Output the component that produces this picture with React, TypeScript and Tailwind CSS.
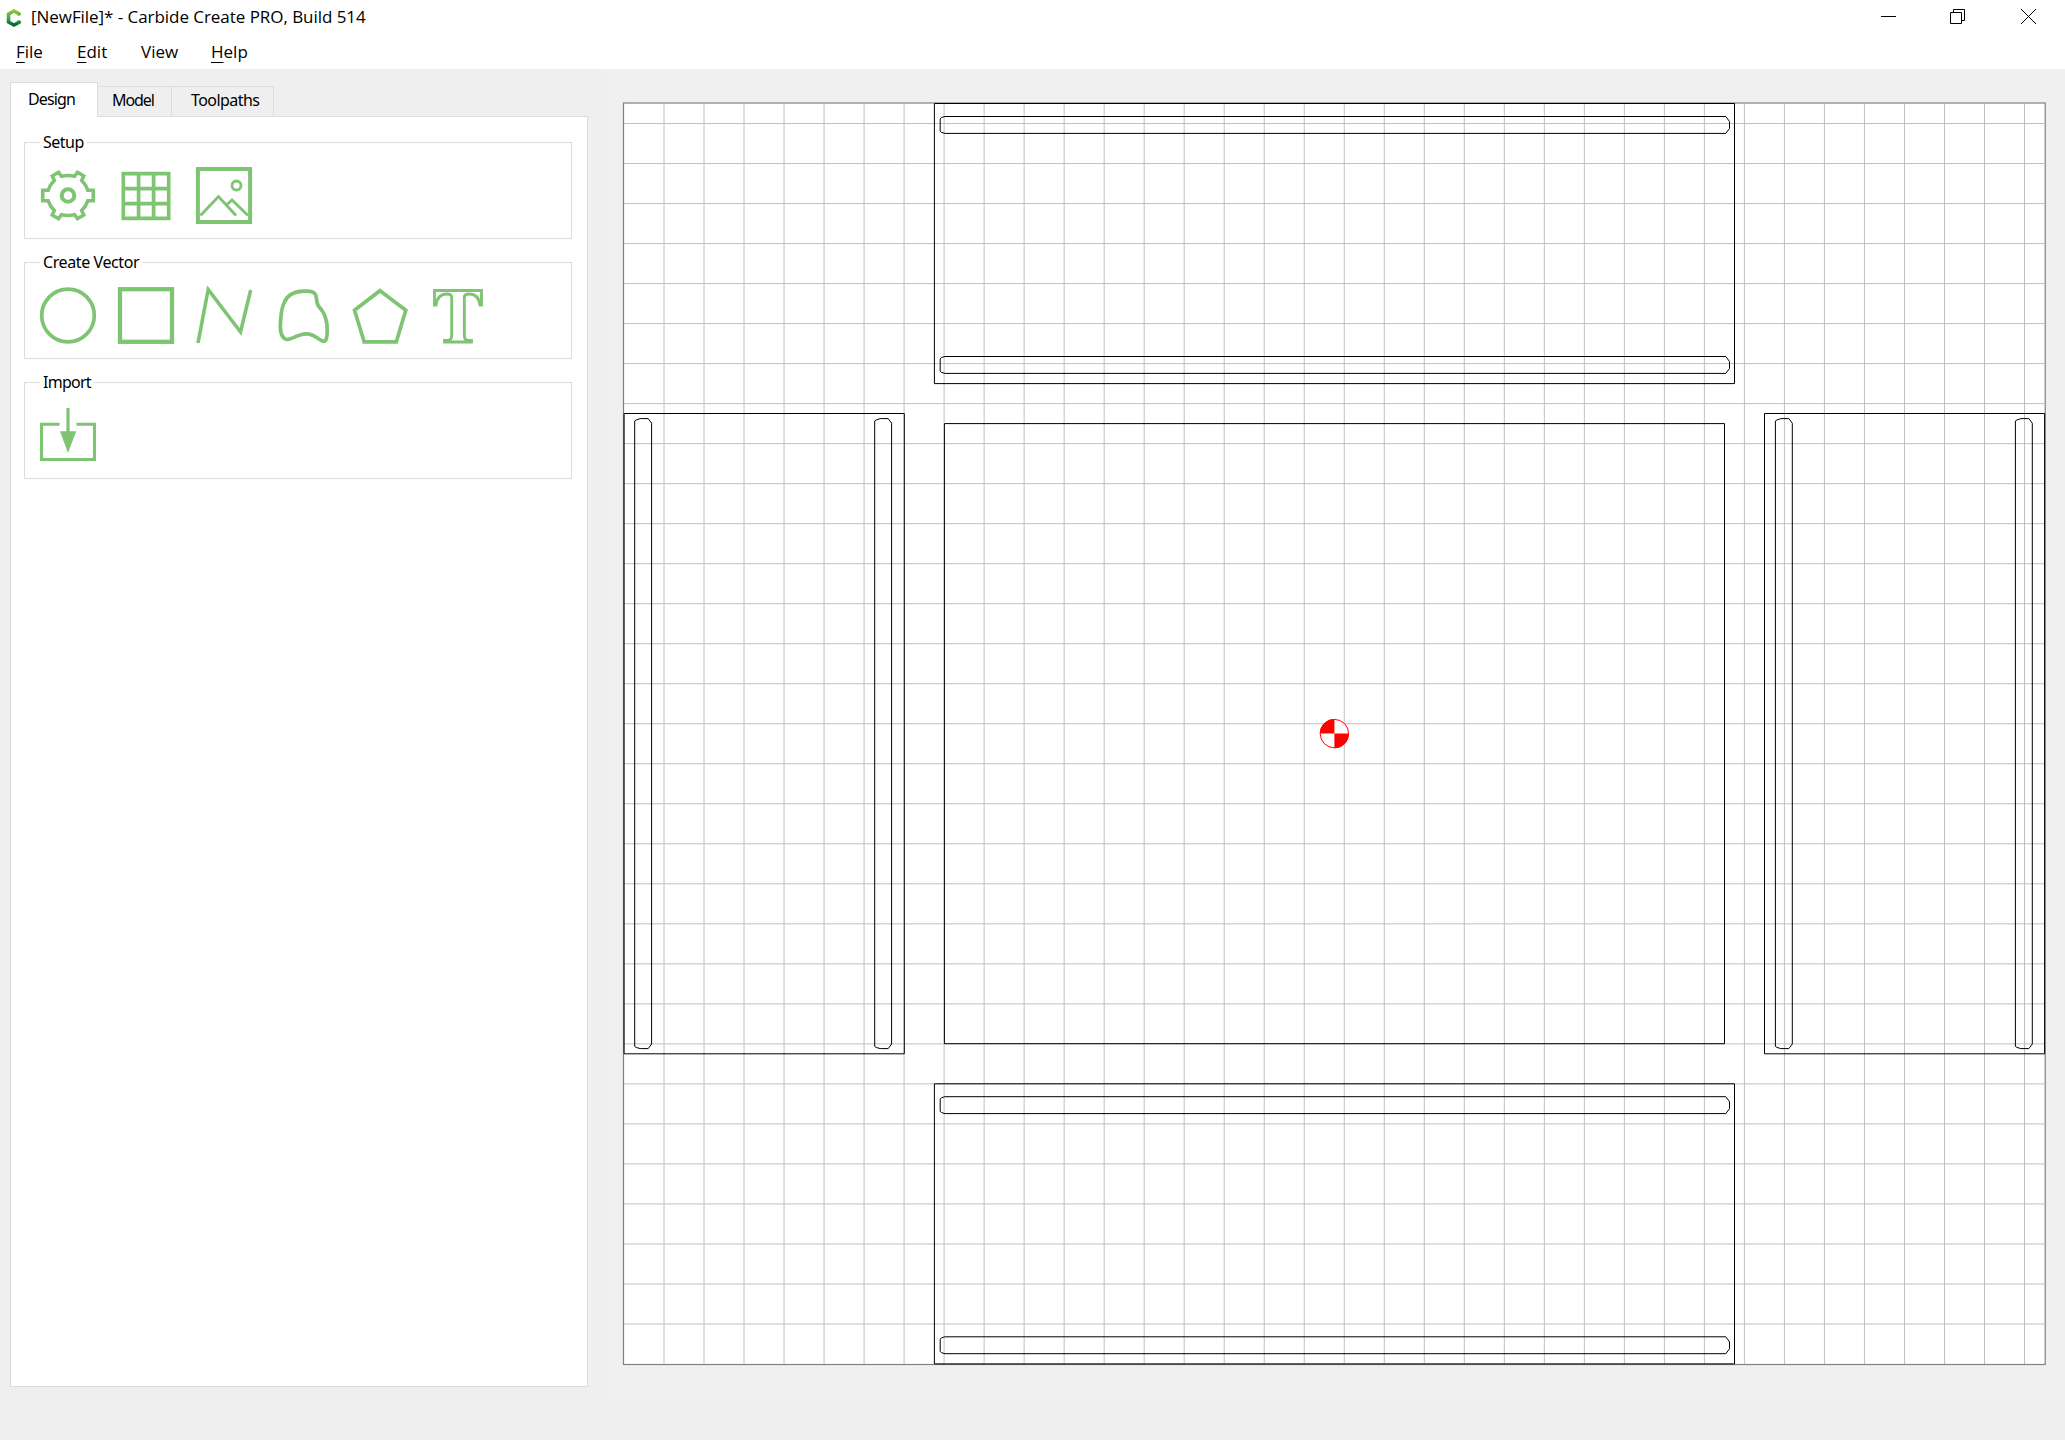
import React from "react";

const GREEN = "#7fc473";

const icon = { width: 60, height: 60, viewBox: "0 0.5 60 60", fill: "none", stroke: GREEN, className: "shrink-0" };

/* Outline of a six-toothed gear centred on (30, 30). */
const Gear = () => (
  <svg {...icon} strokeWidth="3.6">
    <path d="M14.3 10.5L20.5 6.8L23.5 10.800Q30 9.300 36.500 10.800L39.500 6.800L45.700 10.500L43.700 15Q48 19 49.800 24.700H55.300V35.300H49.800Q48 41 43.700 45L45.700 49.500L39.500 53.200L36.500 49.200Q30 50.700 23.500 49.200L20.500 53.200L14.300 49.500L16.300 45Q12 41 10.200 35.300H4.700V24.700H10.200Q12 19 16.300 15Z" />
    <circle cx="30" cy="30" r="6.3" strokeWidth="4" />
  </svg>
);

const GridIcon = () => (
  <svg {...icon} strokeWidth="3.7">
    <path d="M7.3 8.200H52.700V52.900H7.300ZM22.600 8V53M37.600 8V53M7 23.100H53M7 38.100H53" />
  </svg>
);

const Picture = () => (
  <svg {...icon}>
    <rect x="3.900" y="3.500" width="52.200" height="53" strokeWidth="4" />
    <circle cx="42.500" cy="20" r="4.500" strokeWidth="2.800" />
    <path d="M6.500 50L24.500 31L42 50M33 39L38 34.500L54 50" strokeWidth="2.900" />
  </svg>
);

const Circle = () => (
  <svg {...icon}>
    <circle cx="30" cy="30" r="26.300" strokeWidth="3.700" />
  </svg>
);

const Square = () => (
  <svg {...icon}>
    <rect x="4" y="3.700" width="52" height="52.600" strokeWidth="4.300" />
  </svg>
);

const Polyline = () => (
  <svg {...icon}>
    <path d="M4 57.500L14.200 4L46.500 46.500L56.700 4.500" strokeWidth="3.600" />
  </svg>
);

const Curve = () => (
  <svg {...icon}>
    <path d="M31 5.700C37 5.300 42.500 5.500 43.700 9.500C45 14 44.500 18.500 46.800 21C51 26 53.500 29 54.800 38C55.800 49 55 56 51.300 55.800C47.500 55.600 43.500 48.300 34.300 48.300C26 48.300 20.500 54 15.500 54C10 53.500 8.300 48 8.300 40C8.600 32 9.500 23 12 17.500C15 10 20.500 6.200 31 5.700Z" strokeWidth="3.700" />
  </svg>
);

const Pentagon = () => (
  <svg {...icon}>
    <path d="M30 5.200L55.800 24.800L46.300 56.300H14.200L4.500 24.800Z" strokeWidth="3.700" />
  </svg>
);

const TextIcon = () => (
  <svg {...icon} strokeWidth="2.900">
    <path d="M6.500 5H53.500V19.500H52Q50.500 8.500 41 8.500Q36.300 8.500 36.300 12V49Q36.300 55 40 55H43.500V56.500H16.500V55H20Q23.700 55 23.700 49V12Q23.700 8.500 19 8.500Q9.500 8.500 8 19.500H6.500Z" />
  </svg>
);

const ImportIcon = () => (
  <svg {...icon}>
    <path d="M21.500 18.700H3.500V54H56.500V18.700H38.500" strokeWidth="3.100" />
    <path d="M30 2.500V30" strokeWidth="3.200" />
    <path d="M22 25.800H38.200L30 47.500Z" fill={GREEN} stroke="none" />
  </svg>
);

const Logo = () => (
  <svg width="18" height="20" viewBox="0 0 18 20" fill="none" strokeWidth="3.600">
    <defs>
      <linearGradient id="logo" x1="0" y1="0" x2="0" y2="1">
        <stop offset="0" stopColor="#8cc63f" />
        <stop offset="0.550" stopColor="#39a84a" />
        <stop offset="1" stopColor="#006838" />
      </linearGradient>
    </defs>
    <path d="M14.500 7.500L14 5.700L9 3L3.500 6V14L9 17L14 14.300L14.500 12.500" stroke="url(#logo)" />
  </svg>
);

function Group({ title, titleClass, children }: { title: string; titleClass: string; children: React.ReactNode }) {
  return (
    <section className="relative h-[97px] w-[548px] border border-[#dcdcdc] pt-[23px] pl-[13px]">
      <h2 className={`absolute -top-[13px] left-[15px] h-6 bg-white pl-[3px] text-[16px] leading-6 whitespace-nowrap ${titleClass}`}>{title}</h2>
      <div className="flex gap-[18px]">{children}</div>
    </section>
  );
}

const range = (n: number) => Array.from({ length: n }, (_, i) => i);

/* Horizontal slot: nearly square on the left end, chamfered on the right. */
const hSlot = (y: number) =>
  `M945 ${y}H1725.800L1729.500 ${y + 5}V${y + 12}L1725.800 ${y + 16.900}H945L941.500 ${y + 15.900}L940.200 ${y + 14.500}V${y + 2.400}L941.500 ${y + 1}Z`;

const vSlot = (x: number) =>
  `M${x} 421L${x + 1.500} 420L${x + 5.500} 418.600H${x + 13.500}L${x + 16.900} 423.200V1044L${x + 13.500} 1048.600H${x + 5.500}L${x + 1.500} 1047.400L${x} 1046.400Z`;

function DesignCanvas() {
  return (
    <svg width="1459" height="1329" viewBox="606 69 1459 1329" fill="none">
      <rect x="623.500" y="103" width="1421.700" height="1261.500" fill="#fff" stroke="#808080" strokeWidth="1.200" />
      <g stroke="#c0c0c0">
        {range(35).map((i) => (
          <path key={i} d={`M${664 + i * 40.015} 104V1364`} />
        ))}
        {range(31).map((i) => (
          <path key={i} d={`M624 ${123.500 + i * 40.016}H2044.700`} />
        ))}
      </g>
      <g stroke="#000">
        <path d="M934.400 103.500H1734.500V383.600H934.400Z" />
        <path d="M934.400 1083.800H1734.500V1363.900H934.400Z" />
        <path d="M624.100 413.500H904.300V1053.800H624.100Z" />
        <path d="M1764.500 413.500H2044.600V1053.800H1764.500Z" />
        <path d="M944.400 423.600H1724.500V1043.700H944.400Z" />
        <path d={hSlot(116.500)} />
        <path d={hSlot(356.500)} />
        <path d={hSlot(1096.700)} />
        <path d={hSlot(1336.800)} />
        <path d={vSlot(634.700)} />
        <path d={vSlot(874.700)} />
        <path d={vSlot(1775.400)} />
        <path d={vSlot(2015.400)} />
      </g>
      <circle cx="1334.400" cy="733.600" r="14.200" fill="#fff" stroke="#f00" />
      <path d="M1334.400 733.600V719A14.600 14.600 0 0 0 1319.800 733.600ZM1334.400 733.600V748.200A14.600 14.600 0 0 0 1349 733.600Z" fill="#f00" />
    </svg>
  );
}

function WindowButtons() {
  return (
    <div className="flex" aria-hidden>
      <svg width="225" height="35" viewBox="0 0 225 35" fill="none" stroke="#000">
        <path d="M41 16.500H56" />
        <path d="M110.500 12.500H121.500V23.500H110.500ZM113.500 12V9.500H124.500V20.500H122" />
        <path d="M181 9L196 24M196 9L181 24" />
      </svg>
    </div>
  );
}

export default function App() {
  return (
    <div className="flex h-[1440px] w-[2065px] flex-col overflow-hidden bg-[#efefef] font-['Noto_Sans',sans-serif] text-black">
      <header className="h-[69px] shrink-0 bg-white font-['Open_Sans',sans-serif] text-[17px]">
        <div className="flex h-[35px] justify-between">
          <div className="flex items-center pl-[5px]">
            <Logo />
            <h1 className="mb-px ml-2 leading-6 tracking-[-0.05px] whitespace-nowrap">[NewFile]* - Carbide Create PRO, Build 514</h1>
          </div>
          <WindowButtons />
        </div>
        <nav className="flex h-[34px] pl-4 leading-[34px]">
          <span className="w-[61px]"><u className="underline-offset-4">F</u>ile</span>
          <span className="w-16"><u className="underline-offset-4">E</u>dit</span>
          <span className="w-[70px]">View</span>
          <span><u className="underline-offset-4">H</u>elp</span>
        </nav>
      </header>
      <div className="flex grow">
        <aside className="flex w-[606px] flex-col pt-[13px] pl-[10px]">
          <div className="z-10 flex h-[35px] items-end text-[16px]">
            <div className="h-[35px] w-[88px] border border-b-0 border-[#dcdcdc] bg-white pl-[17px] leading-[33px] tracking-[-0.85px]">Design</div>
            <div className="mb-px h-[30px] w-[74px] border-t border-r border-[#dcdcdc] pl-[14px] leading-[27px] tracking-[-1.1px]">Model</div>
            <div className="mb-px h-[30px] w-[102px] border-t border-r border-[#dcdcdc] pl-[19px] leading-[27px] tracking-[-0.55px]">Toolpaths</div>
          </div>
          <main className="-mt-px flex h-[1271px] w-[578px] flex-col gap-[23px] border border-[#dcdcdc] bg-white pt-[25px] pl-[13px]">
            <Group title="Setup" titleClass="w-[47px] tracking-[-0.5px]">
              <Gear />
              <GridIcon />
              <Picture />
            </Group>
            <Group title="Create Vector" titleClass="w-[102px] tracking-[-0.4px]">
              <Circle />
              <Square />
              <Polyline />
              <Curve />
              <Pentagon />
              <TextIcon />
            </Group>
            <Group title="Import" titleClass="w-[54px] tracking-[-0.75px]">
              <ImportIcon />
            </Group>
          </main>
        </aside>
        <div className="h-[1329px] w-[1459px] bg-[#f0f0f0]">
          <DesignCanvas />
        </div>
      </div>
    </div>
  );
}
